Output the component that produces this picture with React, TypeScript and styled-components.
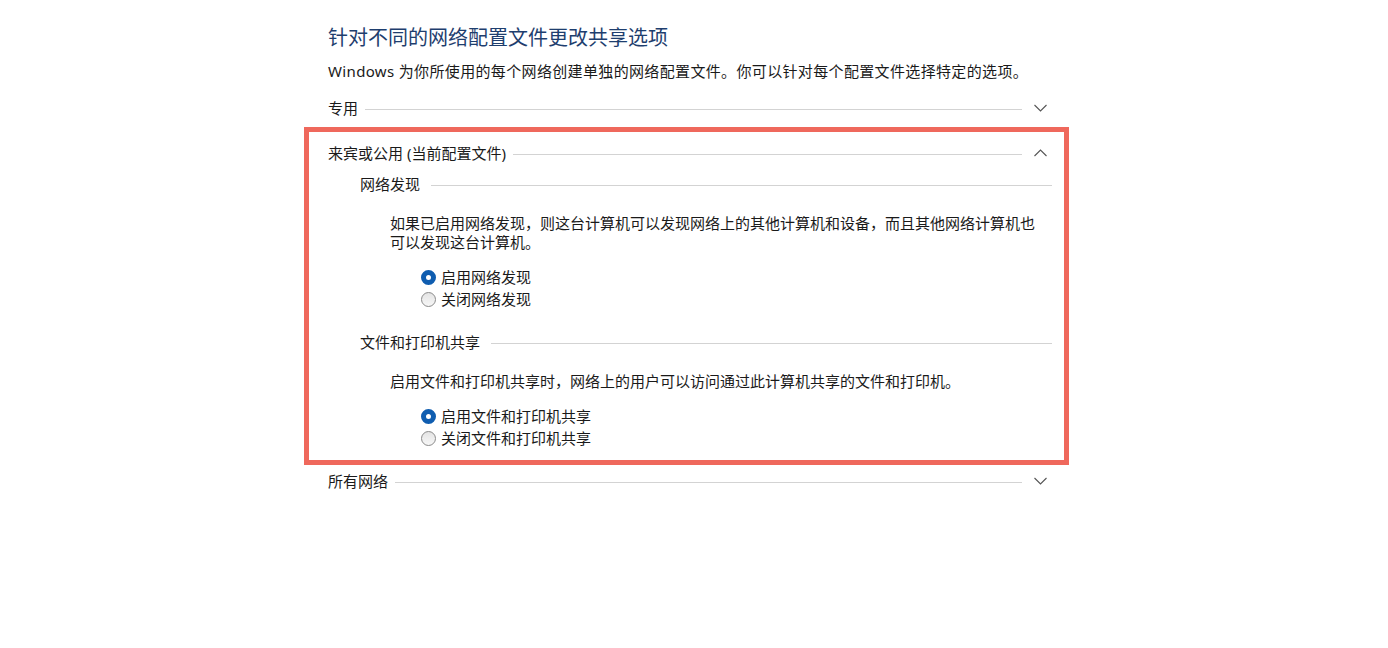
import React from "react";
import styled, { createGlobalStyle } from "styled-components";

const GlobalStyle = createGlobalStyle`
  html, body {
    margin: 0;
    padding: 0;
    background: #ffffff;
  }
  body {
    font-family: "Segoe UI", "Noto Sans", "Noto Sans CJK SC", sans-serif;
    color: #1a1a1a;
  }
`;

type Choice = { label: string; checked: boolean };

type SubSection = {
  title: string;
  text: string;
  choices: Choice[];
};

const guestSections: SubSection[] = [
  {
    title: "网络发现",
    text: "如果已启用网络发现，则这台计算机可以发现网络上的其他计算机和设备，而且其他网络计算机也可以发现这台计算机。",
    choices: [
      { label: "启用网络发现", checked: true },
      { label: "关闭网络发现", checked: false },
    ],
  },
  {
    title: "文件和打印机共享",
    text: "启用文件和打印机共享时，网络上的用户可以访问通过此计算机共享的文件和打印机。",
    choices: [
      { label: "启用文件和打印机共享", checked: true },
      { label: "关闭文件和打印机共享", checked: false },
    ],
  },
];

function Chevron({ up }: { up?: boolean }) {
  return (
    <ChevronBox>
      <svg width="13" height="8" viewBox="0 0 13 8">
        <polyline
          points={up ? "0.5,7 6.5,1 12.5,7" : "0.5,1 6.5,7 12.5,1"}
          fill="none"
          stroke="#555"
          strokeWidth="1.1"
        />
      </svg>
    </ChevronBox>
  );
}

export default function App() {
  return (
    <>
      <GlobalStyle />
      <Page>
        <Title>针对不同的网络配置文件更改共享选项</Title>
        <Intro>
          Windows 为你所使用的每个网络创建单独的网络配置文件。你可以针对每个配置文件选择特定的选项。
        </Intro>

        <ProfileHeader>
          <HeaderText>专用</HeaderText>
          <Rule />
          <Chevron />
        </ProfileHeader>

        <Highlight>
          <ProfileHeader>
            <HeaderText>来宾或公用 (当前配置文件)</HeaderText>
            <Rule />
            <Chevron up />
          </ProfileHeader>

          {guestSections.map((s, i) => (
            <Group key={s.title} $first={i === 0}>
              <GroupHeader>
                <HeaderText>{s.title}</HeaderText>
                <Rule $gap={11} />
              </GroupHeader>
              <Paragraph>{s.text}</Paragraph>
              <Choices>
                {s.choices.map((c) => (
                  <ChoiceRow key={c.label}>
                    <Radio $checked={c.checked} />
                    <span>{c.label}</span>
                  </ChoiceRow>
                ))}
              </Choices>
            </Group>
          ))}
        </Highlight>

        <ProfileHeader $after>
          <HeaderText>所有网络</HeaderText>
          <Rule />
          <Chevron />
        </ProfileHeader>
      </Page>
    </>
  );
}

const Page = styled.div`
  width: 724px;
  margin-left: 328px;
  padding-top: 24px;
  display: flex;
  flex-direction: column;
`;

const Title = styled.h1`
  margin: 0;
  font-size: 20px;
  line-height: 28px;
  font-weight: 400;
  color: #1e3e6e;
`;

const Intro = styled.p`
  margin: 9px 0 0;
  font-size: 15px;
  line-height: 20px;
  letter-spacing: 0.35px;
`;

const ProfileHeader = styled.div<{ $after?: boolean }>`
  display: flex;
  align-items: center;
  height: 24px;
  margin-top: ${(p) => (p.$after ? "4px" : "15px")};
  font-size: 15px;

  &:first-child {
    margin-top: 0;
  }
`;

const HeaderText = styled.span`
  font-size: 15px;
  line-height: 24px;
  white-space: nowrap;
`;

const Rule = styled.div<{ $gap?: number }>`
  flex: 1;
  height: 1px;
  margin-left: ${(p) => p.$gap ?? 7}px;
  margin-top: 3px;
  background: #d3d3d3;
`;

const ChevronBox = styled.div`
  width: 30px;
  height: 24px;
  display: flex;
  align-items: center;
  justify-content: center;
  padding-left: 6px;
  box-sizing: border-box;
`;

const Highlight = styled.section`
  margin: 7px -17px 0 -24px;
  padding: 9px 12px 11px 19px;
  border: 5px solid #ef685c;
  display: flex;
  flex-direction: column;
`;

const Group = styled.div<{ $first?: boolean }>`
  display: flex;
  flex-direction: column;
  margin-top: ${(p) => (p.$first ? "7px" : "20px")};
  padding-left: 32px;
`;

const GroupHeader = styled.div`
  display: flex;
  align-items: center;
  height: 24px;
`;

const Paragraph = styled.p`
  margin: 18px 0 0 30px;
  max-width: 652px;
  font-size: 15px;
  line-height: 19px;
`;

const Choices = styled.div`
  display: flex;
  flex-direction: column;
  margin: 14px 0 0 61px;
`;

const ChoiceRow = styled.label`
  display: flex;
  align-items: center;
  gap: 5px;
  height: 22px;
  font-size: 15px;
  line-height: 22px;
`;

const Radio = styled.span<{ $checked: boolean }>`
  width: 15px;
  height: 15px;
  border-radius: 50%;
  box-sizing: border-box;
  flex-shrink: 0;
  ${(p) =>
    p.$checked
      ? `
    background: #ffffff;
    border: 5px solid #0f5db0;
  `
      : `
    background: linear-gradient(#e4e4e4, #f7f7f7);
    border: 1px solid #8a8a8a;
  `}
`;
